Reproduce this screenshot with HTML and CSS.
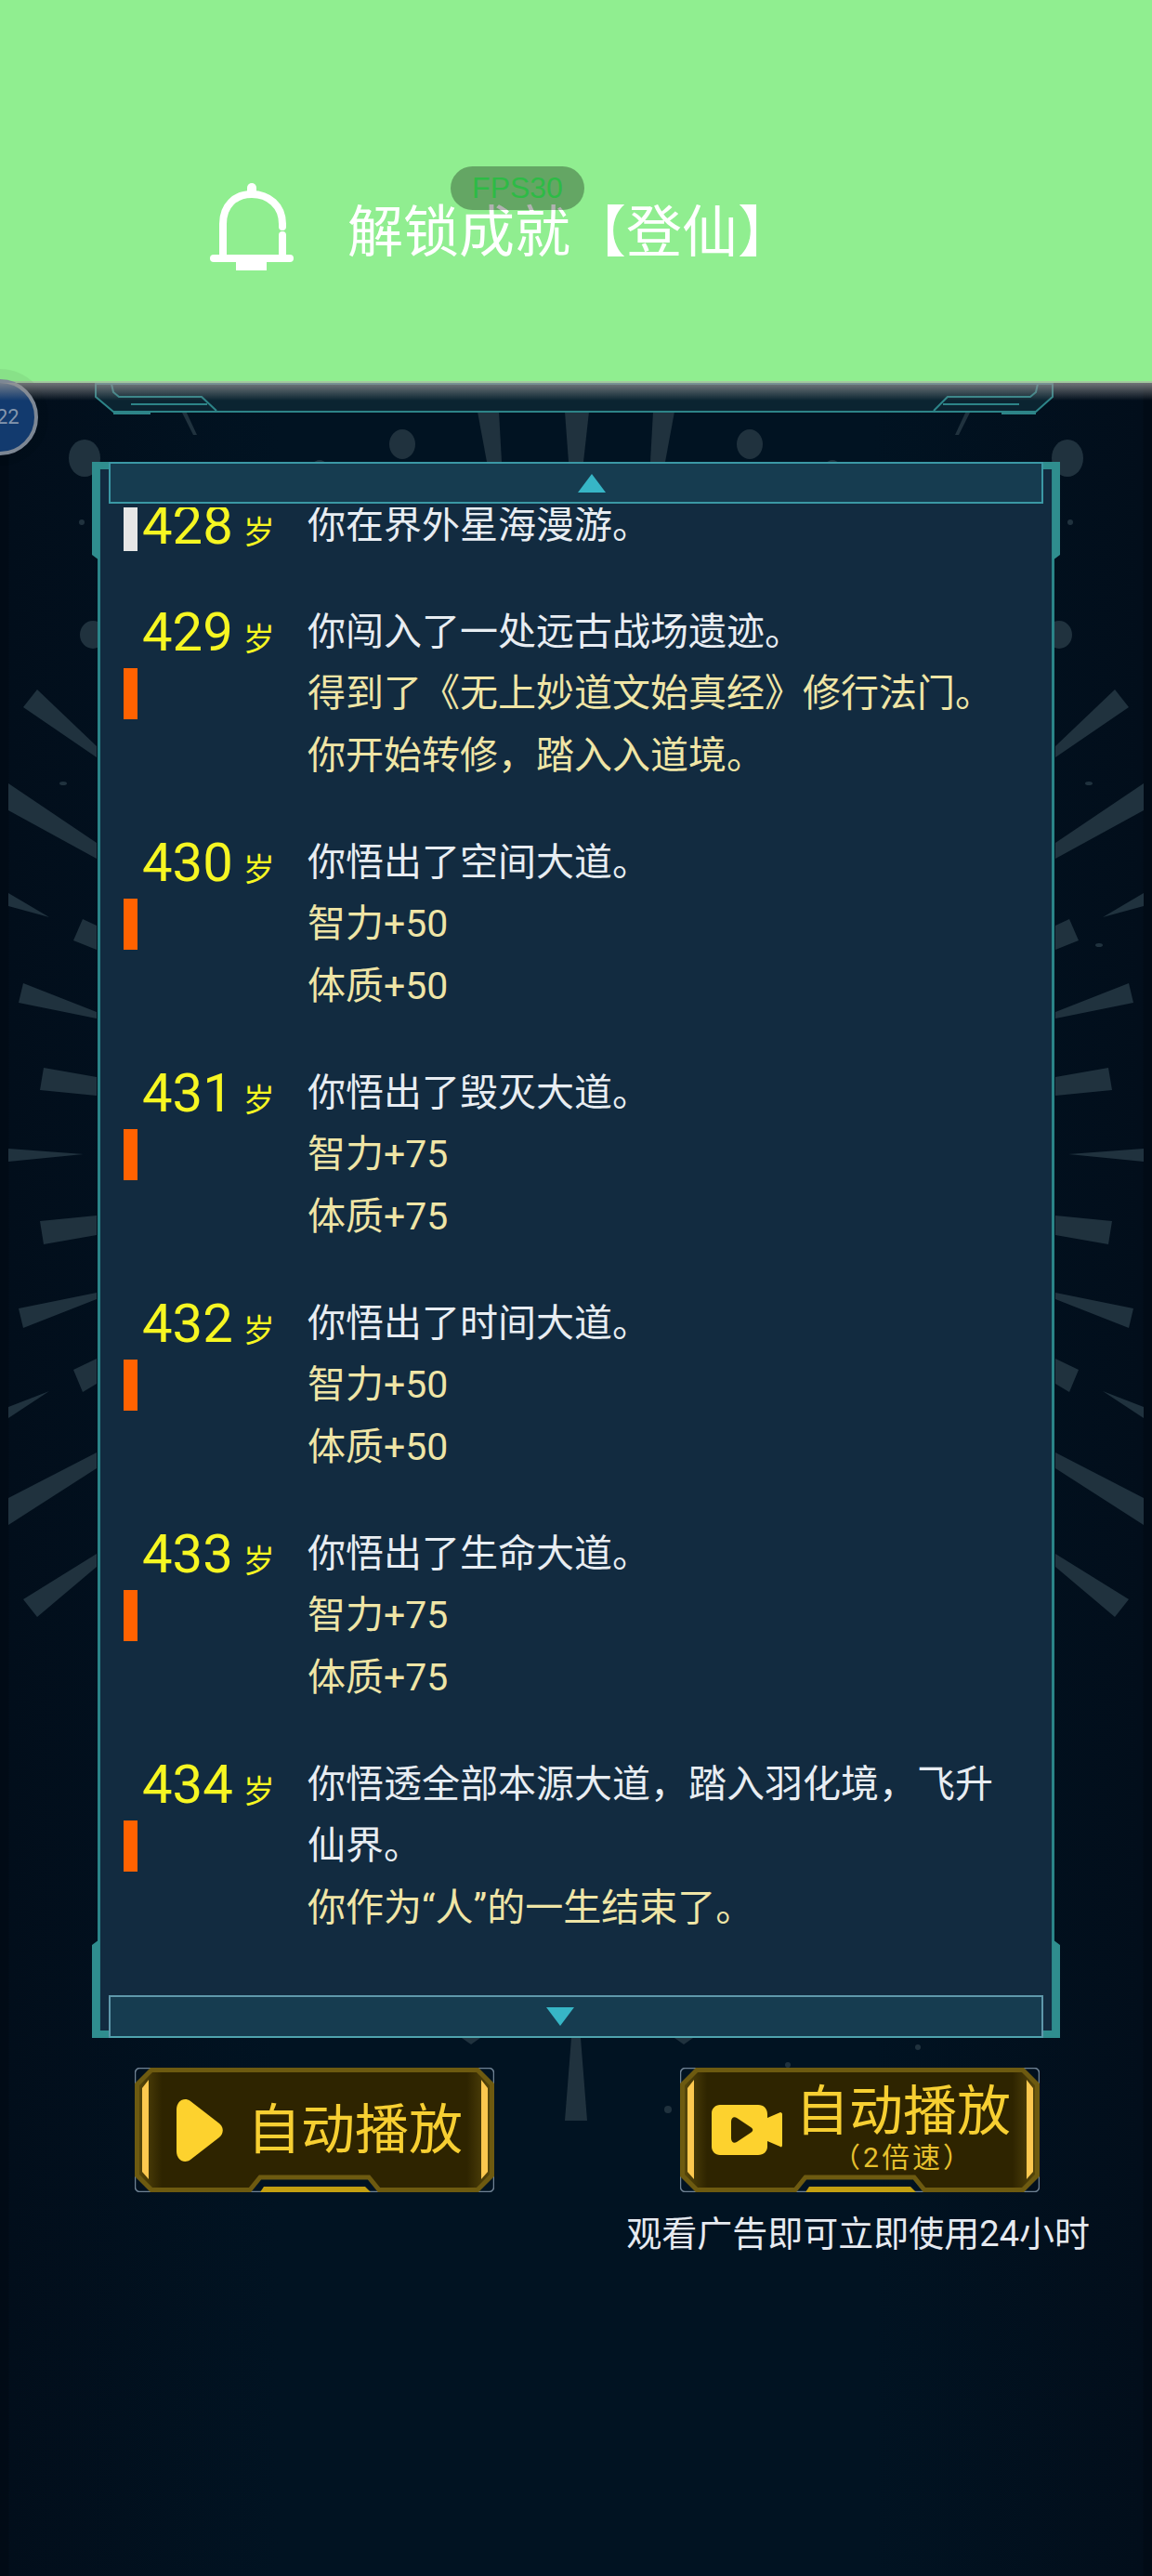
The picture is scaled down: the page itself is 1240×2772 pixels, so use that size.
FILE: index.html
```html
<!DOCTYPE html>
<html lang="zh-CN">

<head>
  <meta charset="UTF-8">
  <meta name="viewport" content="width=device-width, initial-scale=1.0">
  <title>人生重开</title>
  <link rel="stylesheet" href="styles.css">
</head>

<body>
  <div class="stage">
    <!-- burst behind the panel, drawn in page coordinates -->
    <svg class="backdrop" viewBox="0 0 1240 2772" aria-hidden="true">
      <g class="rays" id="raysLeft">
        <polygon points="25,761 40,742 104,803 104,815"/>
        <polygon points="9,843 104,907 104,924 9,872"/>
        <polygon points="9,961 53,987 9,975"/>
        <polygon points="89,989 104,996 104,1022 79,1012"/>
        <polygon points="25,1058 104,1089 104,1096 20,1079"/>
        <polygon points="47,1149 104,1159 104,1179 43,1173"/>
        <polygon points="9,1236 90,1242 9,1250"/>
        <polygon points="43,1314 104,1308 104,1329 47,1339"/>
        <polygon points="20,1408 104,1391 104,1398 25,1429"/>
        <polygon points="79,1474 104,1462 104,1489 89,1498"/>
        <polygon points="9,1514 53,1497 9,1526"/>
        <polygon points="9,1612 104,1563 104,1580 9,1641"/>
        <polygon points="25,1721 104,1672 104,1686 40,1740"/>
        <polygon points="194,440 199,440 212,468 208,468"/>
        <polygon points="514,443 537,443 540,497 524,497"/>
        <ellipse cx="91" cy="493" rx="17" ry="20"/>
        <ellipse cx="433" cy="478" rx="14" ry="16"/>
        <ellipse cx="100" cy="683" rx="14" ry="15"/>
        <circle cx="88" cy="562" r="3"/>
        <ellipse cx="68" cy="843" rx="4" ry="2"/>
        <ellipse cx="344" cy="499" rx="6" ry="4"/>
      </g>
      <use href="#raysLeft" transform="translate(1240,0) scale(-1,1)"/>
      <g class="rays">
        <polygon points="608,443 634,443 628,497 612,497"/>
        <polygon points="497,2193 517,2193 507,2200"/>
        <polygon points="726,2193 746,2193 736,2200"/>
        <polygon points="615,2193 625,2193 632,2282 608,2282"/>
        <circle cx="988" cy="2203" r="3"/>
        <circle cx="848" cy="2222" r="3"/>
        <circle cx="719" cy="2270" r="4"/>
        <ellipse cx="1183" cy="1017" rx="4" ry="2"/>
      </g>
      <g class="frame">
        <path class="frame-band" d="M103 413 V427 L122 443 H1115 L1133 427 V413 Z"/>
        <path d="M120 413 L122 422 L128 427 H217 L233 442"/>
        <path d="M1117 413 L1115 422 L1109 427 H1020 L1005 442"/>
        <path d="M141 435 H223 M1015 435 H1097"/>
        <path d="M122 445 H162 M1078 445 H1115"/>
      </g>
    </svg>

    <header class="banner">
      <svg class="bell" viewBox="0 0 90 94" aria-hidden="true">
        <rect x="40" y="0" width="10" height="16" rx="5"/>
        <path class="bell-line" d="M14 78 V44 C14 24 27 12 45 12 C63 12 78 24 78 44 V47 M78 56 V78"/>
        <rect x="0" y="77" width="90" height="8" rx="4"/>
        <rect x="28" y="84" width="33" height="10"/>
      </svg>
      <span class="banner-text">解锁成就【登仙】</span>
    </header>

    <div class="fps">FPS30</div>

    <div class="bubble"><span class="bubble-num">22</span></div>

    <div class="fade"></div>

    <main class="main">
      <section class="panel">
        <div class="panel-body">
          <div class="bar bar-top"><i class="arrow arrow-up"></i></div>
          <div class="log">
            <div class="log-list">
              <div class="row">
                <i class="mark mark-plain"></i>
                <div class="age"><b>428</b><span class="age-unit">岁</span></div>
                <div class="text">
                  <p>你在界外星海漫游。</p>
                </div>
              </div>
              <div class="row">
                <i class="mark"></i>
                <div class="age"><b>429</b><span class="age-unit">岁</span></div>
                <div class="text">
                  <p>你闯入了一处远古战场遗迹。</p>
                  <p class="gain">得到了《无上妙道文始真经》修行法门。</p>
                  <p class="gain">你开始转修，踏入入道境。</p>
                </div>
              </div>
              <div class="row">
                <i class="mark"></i>
                <div class="age"><b>430</b><span class="age-unit">岁</span></div>
                <div class="text">
                  <p>你悟出了空间大道。</p>
                  <p class="gain">智力+50</p>
                  <p class="gain">体质+50</p>
                </div>
              </div>
              <div class="row">
                <i class="mark"></i>
                <div class="age"><b>431</b><span class="age-unit">岁</span></div>
                <div class="text">
                  <p>你悟出了毁灭大道。</p>
                  <p class="gain">智力+75</p>
                  <p class="gain">体质+75</p>
                </div>
              </div>
              <div class="row">
                <i class="mark"></i>
                <div class="age"><b>432</b><span class="age-unit">岁</span></div>
                <div class="text">
                  <p>你悟出了时间大道。</p>
                  <p class="gain">智力+50</p>
                  <p class="gain">体质+50</p>
                </div>
              </div>
              <div class="row">
                <i class="mark"></i>
                <div class="age"><b>433</b><span class="age-unit">岁</span></div>
                <div class="text">
                  <p>你悟出了生命大道。</p>
                  <p class="gain">智力+75</p>
                  <p class="gain">体质+75</p>
                </div>
              </div>
              <div class="row">
                <i class="mark"></i>
                <div class="age"><b>434</b><span class="age-unit">岁</span></div>
                <div class="text">
                  <p>你悟透全部本源大道，踏入羽化境，飞升仙界。</p>
                  <p class="gain">你作为“人”的一生结束了。</p>
                </div>
              </div>
            </div>
          </div>
          <div class="bar bar-bottom"><i class="arrow arrow-down"></i></div>
        </div>
        <i class="corner corner-tl"></i>
        <i class="corner corner-tr"></i>
        <i class="corner corner-bl"></i>
        <i class="corner corner-br"></i>
      </section>

      <div class="actions">
        <button class="play-btn">
          <svg class="btn-shape" viewBox="0 0 387 134" aria-hidden="true">
            <defs>
              <linearGradient id="btnFill" x1="0" x2="1" y1="0" y2="0">
                <stop offset="0" stop-color="#5a4a0c"/>
                <stop offset="0.07" stop-color="#2e2400"/>
                <stop offset="0.93" stop-color="#2e2400"/>
                <stop offset="1" stop-color="#5a4a0c"/>
              </linearGradient>
              <g id="btnBase">
                <rect class="btn-edge" x="0.5" y="0.5" width="386" height="133" rx="5"/>
                <path class="btn-body" d="M18 2.500 H369 L384.500 18 V116 L369 131.500 H263 L252 118 H135 L124 131.500 H18 L2.500 116 V18 Z"/>
                <path class="btn-side" d="M8 22 L15 13 V120 L8 112 Z M380 22 L373 13 V120 L380 112 Z"/>
                <path class="btn-nub" d="M139 128 H248 L254 134 H135 Z"/>
              </g>
            </defs>
            <use href="#btnBase"/>
          </svg>
          <svg class="icon-play" viewBox="0 0 50 67" aria-hidden="true">
            <path d="M0 11 C0 2 8 -3 15 2 L46 26 C51 30 51 37 46 41 L15 65 C8 70 0 65 0 56 Z"/>
          </svg>
          <span class="btn-label">自动播放</span>
        </button>

        <button class="play-btn play-btn-ad">
          <svg class="btn-shape" viewBox="0 0 387 134" aria-hidden="true">
            <use href="#btnBase"/>
          </svg>
          <svg class="icon-video" viewBox="0 0 76 54" aria-hidden="true">
            <path d="M9 0 H50 C56 0 60 4 60 10 V14 L74 8 C75 8 76 9 76 10 V43 C76 45 75 46 74 45 L60 39 V45 C60 50 56 54 50 54 H9 C4 54 0 50 0 45 V9 C0 4 4 0 9 0 Z"/>
            <path class="icon-video-cut" d="M21 18 C21 14 24 12 27 14 L42 24 C45 26 45 28 42 30 L27 40 C24 42 21 40 21 36 Z"/>
          </svg>
          <span class="btn-stack">
            <span class="btn-label">自动播放</span>
            <span class="btn-sub">（2倍速）</span>
          </span>
        </button>
      </div>

      <p class="ad-note">观看广告即可立即使用24小时</p>
    </main>
  </div>
</body>

</html>
```

FILE: styles.css
```css
html,
body {
  margin: 0;
  padding: 0;
  background-color: #010b16;
}

body {
  width: 1240px;
  height: 2772px;
  overflow: hidden;
  font-family: Roboto, "Noto Sans CJK SC", sans-serif;
}

.stage {
  position: relative;
  width: 1240px;
  height: 2772px;
  overflow: hidden;
  background: linear-gradient(90deg, #010b16 0, #010b16 9px, #020e1b 10px, #011322 300px, #011322 940px, #020e1b 1230px, #010b16 1231px);
}

.backdrop {
  position: absolute;
  top: 0;
  left: 0;
  width: 1240px;
  height: 2772px;
}

.rays {
  fill: #20323e;
}

.frame path {
  fill: none;
  stroke: #2d8488;
  stroke-width: 2;
}

.frame .frame-band {
  fill: #0b2431;
}

.fade {
  position: absolute;
  top: 412px;
  left: 0;
  width: 100%;
  height: 19px;
  background: linear-gradient(rgba(150, 150, 150, 0.75), rgba(150, 150, 150, 0));
}

/* top notice */
.banner {
  position: relative;
  display: flex;
  align-items: center;
  gap: 58px;
  box-sizing: border-box;
  height: 412px;
  padding: 92px 0 0 226px;
  background-color: #90ee90;
  border-bottom: 2px solid #a3c99f;
}

.bell {
  width: 90px;
  height: 94px;
  margin-top: -14px;
  fill: #fff;
}

.bell-line {
  fill: none;
  stroke: #fff;
  stroke-width: 8;
  stroke-linecap: round;
}

.banner-text {
  font-size: 60px;
  line-height: 70px;
  color: #fff;
}

.fps {
  position: absolute;
  top: 179px;
  left: 485px;
  width: 144px;
  height: 47px;
  border-radius: 24px;
  background-color: rgba(0, 0, 0, 0.3);
  color: #2dbb45;
  font-family: "Liberation Sans", sans-serif;
  font-size: 32px;
  line-height: 47px;
  text-align: center;
}

.bubble {
  position: absolute;
  top: 408px;
  left: -41px;
  width: 82px;
  height: 82px;
  box-sizing: border-box;
  border: 4px solid #7d8794;
  border-radius: 50%;
  background-color: #123a6e;
  box-shadow: 0 0 0 11px rgba(0, 0, 0, 0.05);
}

.bubble-num {
  position: absolute;
  top: 25px;
  left: 33px;
  color: #8496ad;
  font-size: 22px;
  line-height: 24px;
}

.main {
  position: relative;
}

/* event log panel */
.panel {
  position: relative;
  box-sizing: border-box;
  width: 1042px;
  height: 1696px;
  margin: 85px 0 0 99px;
  padding: 0 6px;
}

.panel-body {
  display: flex;
  flex-direction: column;
  box-sizing: border-box;
  height: 100%;
  border-left: 3px solid #2a8488;
  border-right: 3px solid #2a8488;
  background-color: #122b40;
}

.corner {
  position: absolute;
  width: 18px;
  height: 106px;
  box-sizing: border-box;
  border: 0 solid #2f8d8e;
}

.corner-tl {
  top: 0;
  left: 0;
  border-width: 8px 0 0 8px;
  clip-path: polygon(0 0, 100% 0, 100% 8px, 8px 8px, 8px 100%, 0 calc(100% - 6px));
}

.corner-tr {
  top: 0;
  right: 0;
  border-width: 8px 8px 0 0;
  clip-path: polygon(0 0, 100% 0, 100% calc(100% - 6px), calc(100% - 8px) 100%, calc(100% - 8px) 8px, 0 8px);
}

.corner-bl {
  bottom: 0;
  left: 0;
  border-width: 0 0 8px 8px;
  clip-path: polygon(0 6px, 8px 0, 8px calc(100% - 8px), 100% calc(100% - 8px), 100% 100%, 0 100%);
}

.corner-br {
  bottom: 0;
  right: 0;
  border-width: 0 8px 8px 0;
  clip-path: polygon(calc(100% - 8px) 0, 100% 6px, 100% 100%, 0 100%, 0 calc(100% - 8px), calc(100% - 8px) calc(100% - 8px));
}

.bar {
  position: relative;
  z-index: 1;
  display: flex;
  align-items: center;
  justify-content: center;
  flex: none;
  box-sizing: border-box;
  margin: 0 9px;
  background-color: #163c50;
  border: 2px solid #3b98a5;
}

.bar-top {
  height: 45px;
}

.bar-bottom {
  height: 46px;
  border-color: #5f98ab #5f98ab #4fa3ad;
}

.arrow {
  width: 0;
  height: 0;
  border-left: 15px solid transparent;
  border-right: 15px solid transparent;
}

.arrow-up {
  margin-left: 34px;
  border-bottom: 20px solid #37b6c6;
}

.arrow-down {
  margin-right: 34px;
  border-top: 20px solid #37b6c6;
}

.log {
  flex: 1;
  min-height: 0;
  margin-top: 4px;
  overflow: hidden;
}

.log-list {
  margin-top: -14px;
}

.row {
  display: flex;
  margin-bottom: 48px;
  line-height: 66.67px;
}

.mark {
  flex: none;
  align-self: center;
  width: 15px;
  height: 55px;
  margin-left: 25px;
  background-color: #ff6200;
}

.mark-plain {
  background-color: #e6e6e6;
}

.age {
  flex: none;
  width: 178px;
  height: 66.67px;
  margin-left: 5px;
  color: #f6f622;
}

.age b {
  font-size: 58px;
  font-weight: 400;
}

.age-unit {
  margin-left: 11px;
  font-size: 34px;
}

.text {
  width: 760px;
  color: #e8edf2;
  font-size: 41px;
}

.text p {
  margin: 0;
}

.text .gain {
  color: #efe5a6;
}

/* auto play buttons */
.actions {
  display: flex;
  gap: 200px;
  margin: 32px 0 0 145px;
}

.play-btn {
  position: relative;
  display: flex;
  align-items: center;
  width: 387px;
  height: 134px;
  padding: 0 0 0 45px;
  border: 0;
  background: none;
  color: #f7cf32;
  font-family: Roboto, "Noto Sans CJK SC", sans-serif;
}

.play-btn-ad {
  padding-left: 34px;
}

.btn-shape {
  position: absolute;
  top: 0;
  left: 0;
  width: 387px;
  height: 134px;
}

.btn-edge {
  fill: none;
  stroke: #6f8294;
  stroke-width: 1.5;
}

.btn-body {
  fill: url(#btnFill);
  stroke: #6d5a10;
  stroke-width: 5;
}

.btn-side {
  fill: #fcc84f;
}

.btn-nub {
  fill: #c4a012;
}

.icon-play {
  position: relative;
  flex: none;
  width: 50px;
  height: 67px;
  margin: 0 26px 0 0;
  fill: #fdd22e;
}

.icon-video {
  position: relative;
  flex: none;
  width: 76px;
  height: 54px;
  margin: 0 14px 0 0;
  fill: #fdd22e;
}

.icon-video-cut {
  fill: #2e2400;
}

.btn-label {
  position: relative;
  font-size: 58px;
  line-height: 64px;
  white-space: nowrap;
}

.btn-stack {
  position: relative;
  display: flex;
  flex-direction: column;
  align-items: center;
  margin-top: -6px;
}

.btn-sub {
  margin-top: 1px;
  color: #e6c02e;
  font-size: 30px;
  line-height: 34px;
  letter-spacing: 3px;
}

.ad-note {
  margin: 20px 67px 0 0;
  color: #e6eaf0;
  font-size: 38px;
  line-height: 50px;
  text-align: right;
}
```
